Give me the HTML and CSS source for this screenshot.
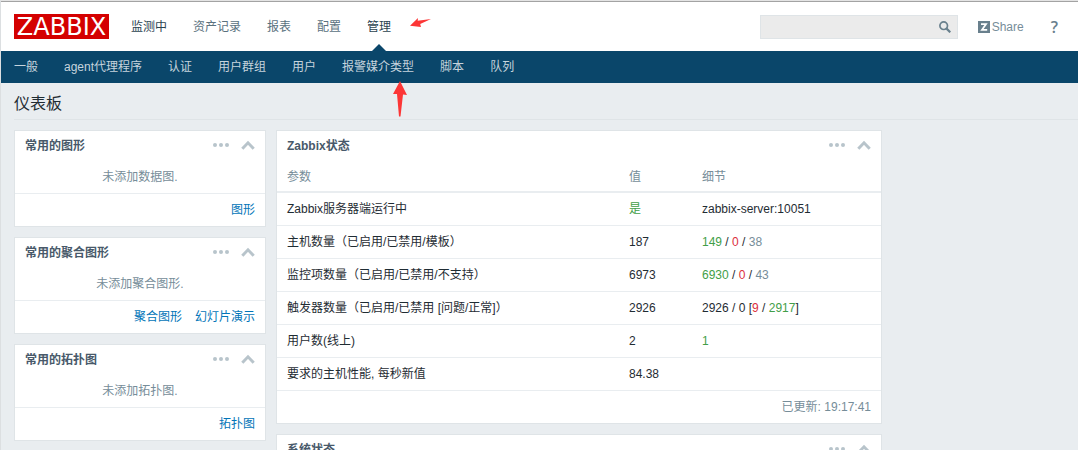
FILE: index.html
```html
<!DOCTYPE html>
<html lang="zh-CN">
<head>
<meta charset="utf-8">
<title>Zabbix 仪表板</title>
<link rel="stylesheet" href="styles.css">
</head>
<body>
<svg class="symbols" aria-hidden="true">
  <symbol id="dots" viewBox="0 0 16 16"><circle cx="2" cy="7" r="2"/><circle cx="8" cy="7" r="2"/><circle cx="14" cy="7" r="2"/></symbol>
  <symbol id="chevron" viewBox="0 0 14 16"><path d="M1.3 10.7 7 4.8l5.700 5.900" fill="none" stroke="currentColor" stroke-width="3"/></symbol>
</svg>
<header class="header">
  <a class="logo" href="#">ZABBIX</a>
  <nav class="top-nav" aria-label="主菜单">
    <a class="active" href="#">监测中</a>
    <a href="#">资产记录</a>
    <a href="#">报表</a>
    <a href="#">配置</a>
    <a class="active selected" href="#">管理</a>
  </nav>
  <form class="search">
    <input class="search-input" type="text" aria-label="搜索">
    <button class="search-button" type="button" aria-label="搜索">
      <svg width="12" height="12" viewBox="0 0 12 12" fill="none" stroke="currentColor"><circle cx="4.700" cy="4.700" r="3.800" stroke-width="1.700"/><path d="m7.600 7.600 3.700 3.700" stroke-width="2.200"/></svg>
    </button>
  </form>
  <a class="share" href="#">
    <svg width="12" height="12" viewBox="0 0 12 12"><rect width="12" height="12" fill="#69808d"/><path d="M3 3.200h5L4 8.800h5.200" fill="none" stroke="#fff" stroke-width="1.800"/></svg>
    Share
  </a>
  <a class="help" href="#" aria-label="帮助">?</a>
  <svg class="arrow arrow-menu" width="21" height="10" viewBox="0 0 21 10" aria-hidden="true"><path d="M0 7.800 8 0l-.3 2.800L21 1 10.200 6l.8 3z"/></svg>
</header>
<nav class="sub-nav" aria-label="管理">
  <a href="#">一般</a>
  <a href="#">agent代理程序</a>
  <a href="#">认证</a>
  <a href="#">用户群组</a>
  <a href="#">用户</a>
  <a href="#" class="marked">报警媒介类型<svg class="arrow arrow-submenu" width="14" height="36" viewBox="0 0 14 36" aria-hidden="true"><path d="M7 0 14 14 10 13.500 7.500 35.500H6L4 13 0 13z"/></svg></a>
  <a href="#">脚本</a>
  <a href="#">队列</a>
</nav>
<main class="page">
  <h1 class="page-title">仪表板</h1>
  <div class="dashboard">
    <div class="column">
      <section class="widget">
        <div class="widget-head"><h2>常用的图形</h2>
          <button type="button" aria-label="菜单"><svg width="16" height="16"><use href="#dots"/></svg></button>
          <button type="button" aria-label="折叠"><svg width="14" height="16"><use href="#chevron"/></svg></button></div>
        <p class="empty">未添加数据图.</p>
        <div class="widget-foot"><a href="#">图形</a></div>
      </section>
      <section class="widget">
        <div class="widget-head"><h2>常用的聚合图形</h2>
          <button type="button" aria-label="菜单"><svg width="16" height="16"><use href="#dots"/></svg></button>
          <button type="button" aria-label="折叠"><svg width="14" height="16"><use href="#chevron"/></svg></button></div>
        <p class="empty">未添加聚合图形.</p>
        <div class="widget-foot"><a href="#">聚合图形</a><a href="#">幻灯片演示</a></div>
      </section>
      <section class="widget">
        <div class="widget-head"><h2>常用的拓扑图</h2>
          <button type="button" aria-label="菜单"><svg width="16" height="16"><use href="#dots"/></svg></button>
          <button type="button" aria-label="折叠"><svg width="14" height="16"><use href="#chevron"/></svg></button></div>
        <p class="empty">未添加拓扑图.</p>
        <div class="widget-foot"><a href="#">拓扑图</a></div>
      </section>
    </div>
    <div class="column">
      <section class="widget">
        <div class="widget-head"><h2>Zabbix状态</h2>
          <button type="button" aria-label="菜单"><svg width="16" height="16"><use href="#dots"/></svg></button>
          <button type="button" aria-label="折叠"><svg width="14" height="16"><use href="#chevron"/></svg></button></div>
        <table class="status">
          <thead><tr><th>参数</th><th class="col-value">值</th><th class="col-detail">细节</th></tr></thead>
          <tbody>
            <tr><td>Zabbix服务器端运行中</td><td class="green">是</td><td>zabbix-server:10051</td></tr>
            <tr><td>主机数量（已启用/已禁用/模板）</td><td>187</td><td><span class="green">149</span> / <span class="red">0</span> / <span class="grey">38</span></td></tr>
            <tr><td>监控项数量（已启用/已禁用/不支持）</td><td>6973</td><td><span class="green">6930</span> / <span class="red">0</span> / <span class="grey">43</span></td></tr>
            <tr><td>触发器数量（已启用/已禁用 [问题/正常]）</td><td>2926</td><td>2926 / 0 [<span class="red">9</span> / <span class="green">2917</span>]</td></tr>
            <tr><td>用户数(线上)</td><td>2</td><td class="green">1</td></tr>
            <tr><td>要求的主机性能, 每秒新值</td><td>84.38</td><td></td></tr>
          </tbody>
        </table>
        <div class="widget-foot plain">已更新: 19:17:41</div>
      </section>
      <section class="widget">
        <div class="widget-head"><h2>系统状态</h2>
          <button type="button" aria-label="菜单"><svg width="16" height="16"><use href="#dots"/></svg></button>
          <button type="button" aria-label="折叠"><svg width="14" height="16"><use href="#chevron"/></svg></button></div>
      </section>
    </div>
  </div>
</main>
</body>
</html>
```
FILE: styles.css
```css
* { box-sizing: border-box; }

body {
  margin: 0;
  min-height: 100vh;
  border-top: 1px solid #e4e4e4;
  border-left: 1px solid #dcdfe1;
  background: #e9edf0;
  color: #1f2c33;
  font: 12px/16px "Liberation Sans", "Noto Sans CJK SC", sans-serif;
}

a { color: #0275b8; text-decoration: none; }
h1, h2, p { margin: 0; }
button { padding: 0; border: 0; background: none; }
svg { display: block; }
.symbols { position: absolute; width: 0; height: 0; }

.header {
  position: relative;
  display: flex;
  align-items: center;
  height: 50px;
  padding: 0 20px 0 13px;
  border-top: 1px solid #a3a3a3;
  background: #fff;
}

.logo {
  width: 95px;
  height: 25px;
  margin-right: 22px;
  background: #d40000;
  color: #fff;
  font: 24px/27px "DejaVu Sans", sans-serif;
  text-align: center;
}

.top-nav { display: flex; flex: 1; gap: 26px; }
.top-nav a { position: relative; color: #5a717e; line-height: 50px; }
.top-nav .active { color: #2b4350; }
.selected::after {
  content: "";
  position: absolute;
  bottom: 0;
  left: 50%;
  margin-left: -8px;
  border: 8px solid transparent;
  border-top: 0;
  border-bottom-color: #0a466a;
}

.search {
  display: flex;
  width: 198px;
  height: 24px;
  border: 1px solid #dfe4e7;
  background: #ebebeb;
}
.search-input { flex: 1; min-width: 0; padding: 0 6px; border: 0; background: none; font: inherit; }
.search-button { display: grid; place-items: center; width: 24px; color: #69808d; }

.share { display: flex; align-items: center; gap: 2px; margin-left: 20px; color: #768d99; }
.help { margin-left: 27px; color: #69808d; font: 600 16px/16px "Open Sans", sans-serif; }

.arrow { position: absolute; fill: #fc3636; }
.arrow-menu { top: 16px; left: 409px; }

.sub-nav { display: flex; gap: 26px; padding: 0 13px; background: #0a466a; }
.sub-nav a { color: #c6d4dd; line-height: 32px; }
.marked { position: relative; }
.arrow-submenu { top: 30px; left: 51px; }

.page { padding-left: 13px; }
.page-title {
  padding: 11px 0 5px;
  border-bottom: 1px solid #dfe4e7;
  font-size: 16px;
  font-weight: normal;
  line-height: 20px;
}

.dashboard {
  display: grid;
  grid-template-columns: 252fr 606fr 176fr;
  gap: 10px;
  padding: 10px 10px 10px 0;
}
.column { display: flex; flex-direction: column; gap: 10px; }

.widget { border: 1px solid #dfe4e7; background: #fff; }
.widget-head { display: flex; align-items: center; gap: 12px; height: 30px; padding: 0 10px; }
.widget-head h2 { flex: 1; color: #48596a; font-size: 12px; }
.widget-head button { color: #b8c4cb; fill: #b8c4cb; }
.empty { padding: 8px 10px; color: #768d99; text-align: center; }
.widget-foot {
  display: flex;
  justify-content: flex-end;
  gap: 13px;
  padding: 8px 10px;
  border-top: 1px solid #e9edf0;
}
.plain { border-top: 0; color: #768d99; }

.status { width: 100%; border-collapse: separate; border-spacing: 0; table-layout: fixed; }
.status th, .status td { padding: 8px 10px; border-bottom: 1px solid #e9edf0; text-align: left; }
.status th { padding-bottom: 6px; border-bottom-width: 2px; color: #768d99; font-weight: normal; }
.col-value { width: 73px; }
.col-detail { width: 189px; }
.status .green { color: #429e47; }
.status .red { color: #dc2f3c; }
.status .grey { color: #768d99; }
```
